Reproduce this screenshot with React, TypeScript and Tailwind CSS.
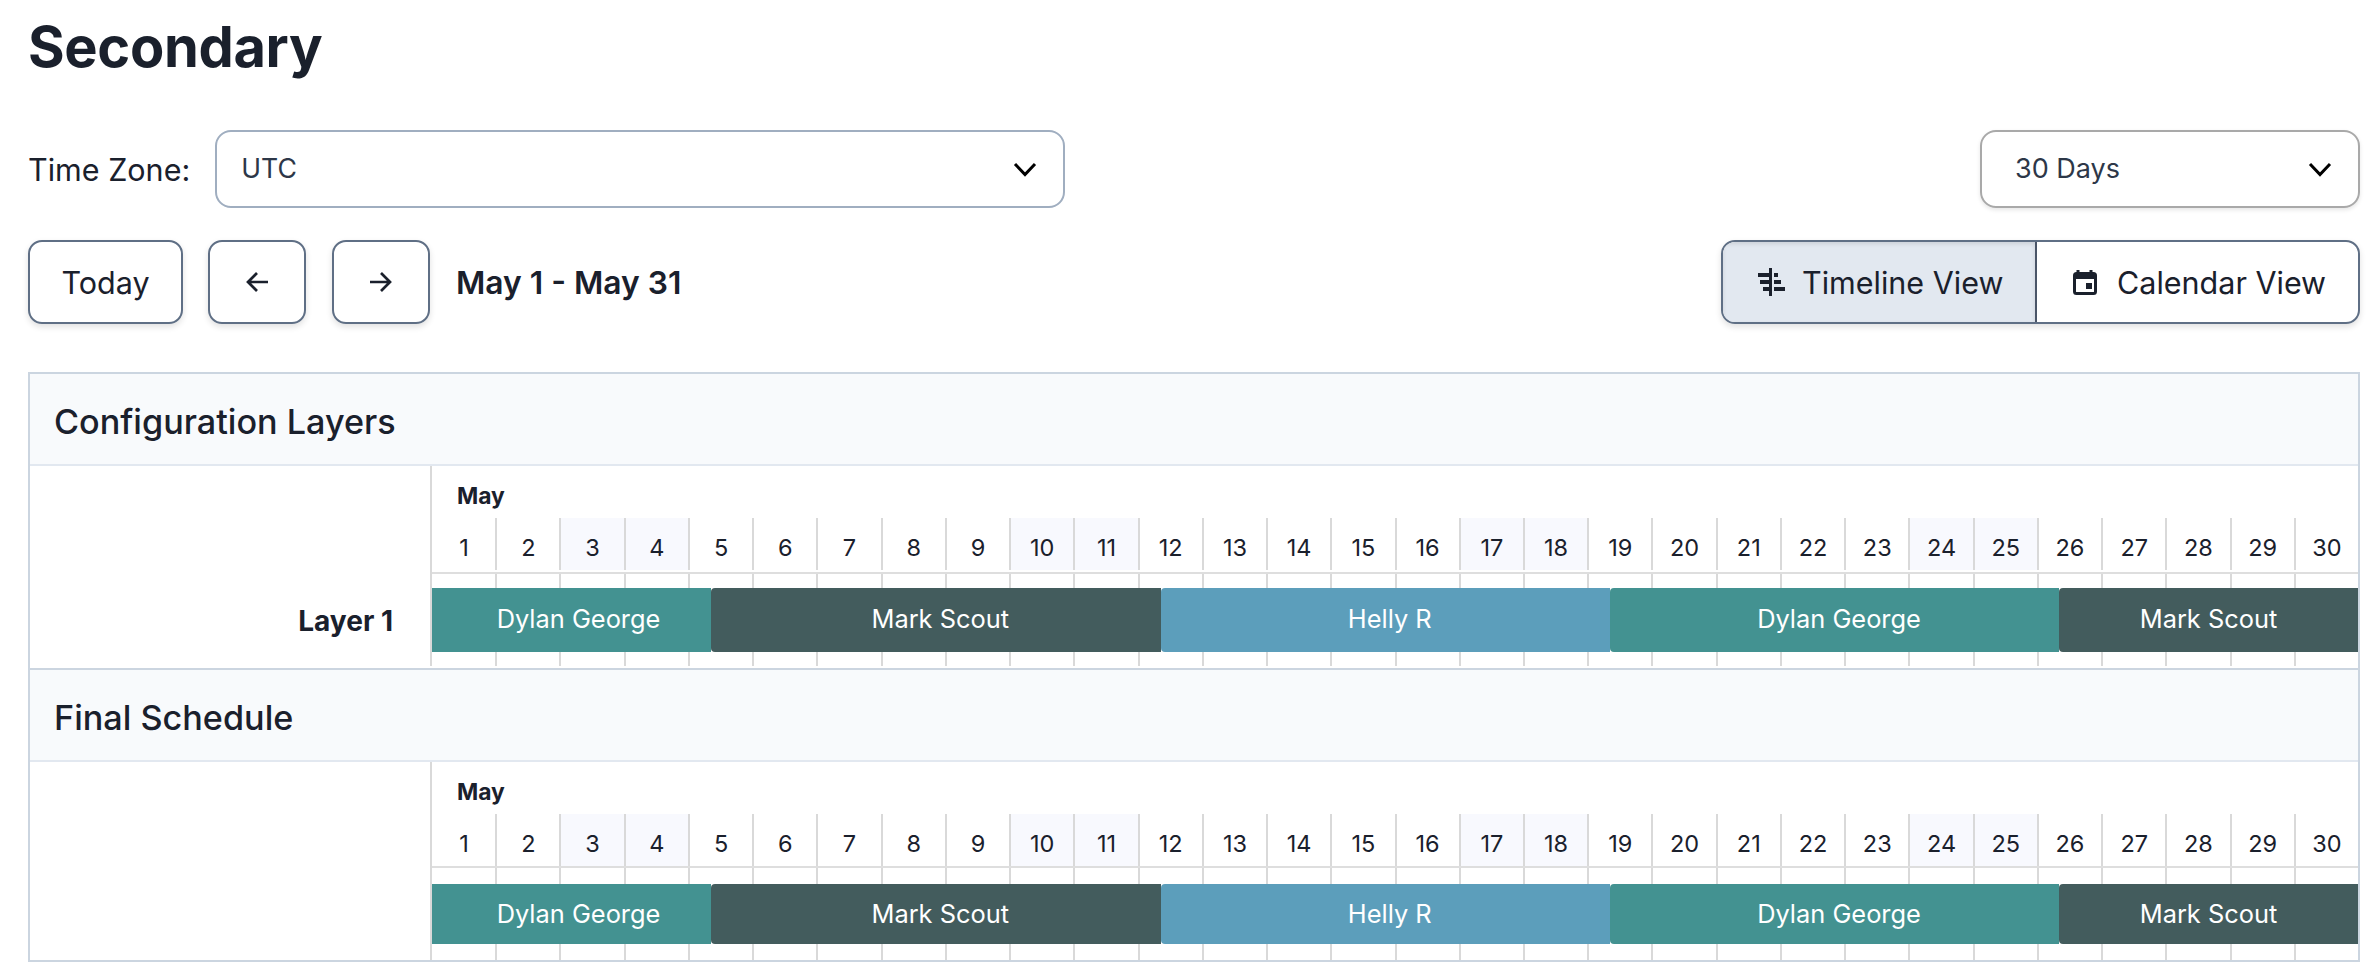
import React from "react";

const days = Array.from({ length: 30 }, (_, i) => i + 1);
const weekend = [3, 4, 10, 11, 17, 18, 24, 25];

function Chevron() {
  return (
    <svg width="24" height="15" viewBox="0 0 24 15" fill="none" className="shrink-0">
      <path d="M2 2 L12 12.5 L22 2" stroke="#000" strokeWidth="3" />
    </svg>
  );
}

function Bar({ label, color, width, rounded, pad, tall }: { label: string; color: string; width?: string; rounded?: boolean; pad: string; tall?: boolean }) {
  return (
    <div
      className={`${width ?? "flex-1"} ${color} ${rounded ? "rounded-l-[4px]" : ""} ${pad} ${tall ? "pb-[2px]" : ""} h-full flex items-center justify-center text-[25.4px] text-white`}
    >
      {label}
    </div>
  );
}

function Section({
  title,
  label,
  tall,
}: {
  title: string;
  label?: string;
  tall?: boolean;
}) {
  return (
    <div>
      <div className="h-[92px] bg-[#f8fafc] border-b-2 border-[#e2e8f0] flex items-center pl-[24px] pt-[5px] text-[34.2px] font-medium text-[#1a202c]">
        {title}
      </div>
      <div className={`flex ${tall ? "h-[200px] mb-[2px]" : "h-[198px]"}`}>
        <div className="w-[402px] shrink-0 border-r-2 border-[#d9d9d9] flex items-end justify-end pr-[37px] pb-[25px] text-[28px] leading-[40px] font-bold text-[#1a202c]">
          {label}
        </div>
        <div className="flex-1 flex flex-col min-w-0">
          <div className="h-[52px] pl-[25px] pt-[8px] flex items-center text-[22.8px] font-bold text-[#1a202c]">May</div>
          <div className="h-[52px] flex pl-[1px]">
            {days.map((d) => (
              <div
                key={d}
                className={`flex-1 flex items-center justify-center pt-[7px] text-[23.5px] text-[#1a202c] ${
                  d < 30 ? "border-r-2 border-[#d9d9d9]" : ""
                } ${weekend.includes(d) ? "bg-[#f8f9fe]" : ""}`}
              >
                {d}
              </div>
            ))}
          </div>
          <div className={`h-[2px] bg-[#dedede] ${tall ? "mt-[2px]" : ""}`} />
          <div className="relative h-[92px]">
            <div className="flex h-full pl-[1px]">
              {days.map((d) => (
                <div key={d} className={`flex-1 ${d < 30 ? "border-r-2 border-[#d9d9d9]" : ""}`} />
              ))}
            </div>
            <div className={`absolute left-0 right-0 flex ${tall ? "top-[14px] h-[64px]" : "top-[16px] h-[60px]"}`}>
              <Bar label="Dylan George" color="bg-[#439291]" width="w-[279px]" pad="pl-[14px]" tall={tall} />
              <Bar label="Mark Scout" color="bg-[#435c5d]" width="w-[449.5px]" rounded pad="pl-[9px]" tall={tall} />
              <Bar label="Helly R" color="bg-[#5c9ebb]" width="w-[449.5px]" rounded pad="pl-[9px]" tall={tall} />
              <Bar label="Dylan George" color="bg-[#439291]" width="w-[449px]" rounded pad="pl-[9px]" tall={tall} />
              <Bar label="Mark Scout" color="bg-[#435c5d]" rounded pad="pl-0" tall={tall} />
            </div>
          </div>
        </div>
      </div>
    </div>
  );
}

export default function App() {
  return (
    <div className="w-[2378px] h-[976px] overflow-hidden bg-white pl-[28px] pr-[18px] [font-family:Inter,sans-serif] text-[#1a202c]">
      <h1 className="h-[94px] flex items-center text-[56px] tracking-[-0.35px] font-bold mb-[36px]">Secondary</h1>

      <div className="flex items-center justify-between h-[78px]">
        <div className="flex items-center gap-[25px]">
          <span className="text-[30.5px] pt-[1px]">Time Zone:</span>
          <div className="w-[850px] h-[78px] rounded-[16px] border-2 border-[#a0aec0] flex items-center justify-between pl-[24px] pr-[26px] text-[26.6px] text-[#2d3748]">
            <span>UTC</span>
            <Chevron />
          </div>
        </div>
        <div className="w-[380px] h-[78px] rounded-[16px] border-2 border-[#a9a9a9] shadow-[0_2px_4px_rgba(0,0,0,0.1)] flex items-center justify-between pl-[33px] pr-[26px] text-[27px] text-[#2d3748]">
          <span className="pt-[1px]">30 Days</span>
          <Chevron />
        </div>
      </div>

      <div className="mt-[32px] flex items-center justify-between h-[84px]">
        <div className="flex items-center">
          <button className="w-[155px] h-[84px] rounded-[14px] border-2 border-[#5f6f85] shadow-[0_3px_6px_rgba(0,0,0,0.12)] text-[30.5px] pt-[2px] flex items-center justify-center">
            Today
          </button>
          <button className="ml-[25px] w-[98px] h-[84px] rounded-[14px] border-2 border-[#5f6f85] shadow-[0_3px_6px_rgba(0,0,0,0.12)] flex items-center justify-center">
            <svg width="24" height="24" viewBox="0 0 24 24" fill="none">
              <path d="M23 12 H3 M12 3 L3 12 L12 21" stroke="#1a202c" strokeWidth="2.7" />
            </svg>
          </button>
          <button className="ml-[26px] w-[98px] h-[84px] rounded-[14px] border-2 border-[#5f6f85] shadow-[0_3px_6px_rgba(0,0,0,0.12)] flex items-center justify-center">
            <svg width="24" height="24" viewBox="0 0 24 24" fill="none">
              <path d="M1 12 H21 M12 3 L21 12 L12 21" stroke="#1a202c" strokeWidth="2.7" />
            </svg>
          </button>
          <span className="ml-[26px] pt-[2px] text-[31.8px] font-semibold">May 1 - May 31</span>
        </div>
        <div className="w-[639px] h-[84px] flex rounded-[14px] border-2 border-[#5f6f85] shadow-[0_3px_6px_rgba(0,0,0,0.12)] overflow-hidden text-[30.5px]">
          <div className="w-[314px] border-r-2 border-[#4a5568] bg-[#e2e8f0] flex items-center pl-[32px] gap-[17px] shadow-[inset_0_2px_4px_rgba(0,0,0,0.1)]">
            <svg width="30" height="30" viewBox="0 0 30 30" fill="#1a202c" className="shrink-0">
              <rect x="14" y="1" width="3" height="28" />
              <rect x="3" y="6" width="11" height="4" />
              <rect x="5" y="13" width="9" height="4" />
              <rect x="8" y="20" width="6" height="4" />
              <rect x="19" y="6" width="4" height="4" />
              <rect x="19" y="13" width="7" height="4" />
              <rect x="19" y="20" width="11" height="4" />
            </svg>
            <span className="pt-[2px]">Timeline View</span>
          </div>
          <div className="flex-1 flex items-center pl-[35px] gap-[19px]">
            <svg width="26" height="26" viewBox="0 0 26 26" fill="none" className="shrink-0">
              <path d="M6 1 V5 M19 1 V5" stroke="#1a202c" strokeWidth="3" />
              <rect x="2.5" y="4.5" width="21" height="20" rx="2" stroke="#1a202c" strokeWidth="3" />
              <rect x="2.5" y="5" width="21" height="5" fill="#1a202c" />
              <rect x="14" y="14" width="6" height="6" fill="#1a202c" />
            </svg>
            <span className="pt-[2px]">Calendar View</span>
          </div>
        </div>
      </div>

      <div className="mt-[48px] border-2 border-[#cbd5e0] h-[590px]">
        <Section title="Configuration Layers" label="Layer 1" tall />
        <div className="h-[2px] bg-[#cbd5e0]" />
        <Section title="Final Schedule" />
      </div>
    </div>
  );
}
